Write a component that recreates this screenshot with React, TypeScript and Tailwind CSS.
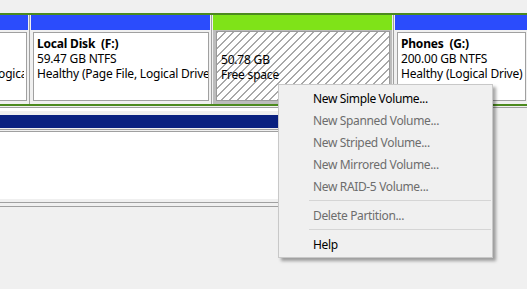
import React from "react";

const hatch =
  "bg-white bg-[repeating-linear-gradient(-45deg,transparent_0px,transparent_4.8px,#a8a8a8_4.8px,#a8a8a8_5.66px)]";

function Divider() {
  return (
    <div className="w-[3px] shrink-0 flex">
      <div className="w-[1px] bg-[#f0f0f0]" />
      <div className="w-[1px] bg-[#a0a0a0]" />
      <div className="w-[1px] bg-[#f0f0f0]" />
    </div>
  );
}

function MenuItem({ label, disabled }: { label: string; disabled?: boolean }) {
  return (
    <div
      className={`h-[22px] flex items-center pl-[34px] ${
        disabled ? "text-[#6d6d6d]" : "text-black"
      }`}
    >
      {label}
    </div>
  );
}

function Sep() {
  return (
    <div className="h-[7px] flex items-center">
      <div className="ml-[30px] mr-[1px] flex-1 h-[1px] bg-[#d5d5d5]" />
    </div>
  );
}

export default function App() {
  return (
    <div className="relative w-[527px] h-[289px] overflow-hidden bg-[#f0f0f0] font-['Noto_Sans','Open_Sans',sans-serif] text-[12px] leading-[15px] tracking-[-0.35px] text-black">
      <div className="h-[13px]" />
      <div className="h-[2px] bg-[#4c8a1e]" />
      {/* partitions row */}
      <div className="flex h-[89px] tracking-[-0.2px]">
        {/* col1 */}
        <div className="w-[28px] shrink-0 flex flex-col overflow-hidden">
          <div className="h-[15px] bg-[#2b4cfc]" />
          <div className="flex-1 pt-[2px] pb-[3px] pr-[1px]">
            <div className="h-full bg-white border border-l-0 border-[#a0a0a0] pt-[3px] pr-[2px]">
              <div className="overflow-hidden whitespace-nowrap">
                <div className="h-[15px]" />
                <div className="h-[15px]" />
                <div className="-ml-[8px]">Logical Drive)</div>
              </div>
            </div>
          </div>
        </div>
        <Divider />
        {/* col2 */}
        <div className="w-[179px] shrink-0 flex flex-col">
          <div className="h-[15px] bg-[#2b4cfc]" />
          <div className="flex-1 pt-[2px] pb-[3px] pl-[2px] pr-[1px]">
            <div className="h-full bg-white border border-[#a0a0a0] overflow-hidden pt-[3px] pl-[3px] whitespace-nowrap">
              <div className="font-bold">Local Disk&nbsp; (F:)</div>
              <div>59.47 GB NTFS</div>
              <div>Healthy (Page File, Logical Drive)</div>
            </div>
          </div>
        </div>
        <Divider />
        {/* col3 selected free space */}
        <div className="w-[179px] shrink-0 flex flex-col">
          <div className="h-[15px] bg-[#7fe318]" />
          <div className="flex-1 bg-[#bcbcbc] pt-[1px] pb-[3px] pl-[3px] pr-[2px]">
            <div className={`h-full border border-[#9a9a9a] overflow-hidden pt-[5px] pl-[4px] whitespace-nowrap ${hatch}`}>
              <div className="h-[15px]" />
              <div>50.78 GB</div>
              <div>Free space</div>
            </div>
          </div>
        </div>
        <Divider />
        {/* col4 */}
        <div className="flex-1 flex flex-col">
          <div className="h-[15px] bg-[#2b4cfc]" />
          <div className="flex-1 pt-[2px] pb-[3px] pl-[2px] pr-[1px]">
            <div className="h-full bg-white border border-[#a0a0a0] overflow-hidden pt-[3px] pl-[3px] whitespace-nowrap">
              <div className="font-bold">Phones&nbsp; (G:)</div>
              <div>200.00 GB NTFS</div>
              <div>Healthy (Logical Drive)</div>
            </div>
          </div>
        </div>
      </div>
      <div className="h-[2px] bg-[#4c8a1e]" />
      <div className="h-[1px]" />
      <div className="h-[1px] bg-[#a0a0a0]" />
      {/* next disk block */}
      <div className="w-[400px] flex flex-col">
        <div className="h-[3px] bg-white" />
        <div className="h-[4px] bg-[#f0f0f0]" />
        <div className="h-[13px] bg-[#0a2180]" />
        <div className="h-[1px] bg-[#f0f0f0]" />
        <div className="h-[1px] bg-[#a0a0a0]" />
        <div className="h-[1px] bg-[#f0f0f0]" />
        <div className="h-[1px] bg-[#a0a0a0]" />
        <div className="h-[67px] bg-white" />
        <div className="h-[3px] bg-[#f0f0f0]" />
        <div className="h-[1px] bg-[#a0a0a0]" />
        <div className="h-[3px] bg-[#f0f0f0]" />
        <div className="h-[1px] bg-[#a0a0a0]" />
      </div>
      {/* context menu */}
      <div className="absolute left-[278px] top-[84px] w-[215px] bg-[#f0f0f0] border border-[#c8c8c8] py-[2px] shadow-[3px_3px_3px_rgba(0,0,0,0.35)]">
        <MenuItem label="New Simple Volume..." />
        <MenuItem label="New Spanned Volume..." disabled />
        <MenuItem label="New Striped Volume..." disabled />
        <MenuItem label="New Mirrored Volume..." disabled />
        <MenuItem label="New RAID-5 Volume..." disabled />
        <Sep />
        <MenuItem label="Delete Partition..." disabled />
        <Sep />
        <MenuItem label="Help" />
      </div>
    </div>
  );
}
